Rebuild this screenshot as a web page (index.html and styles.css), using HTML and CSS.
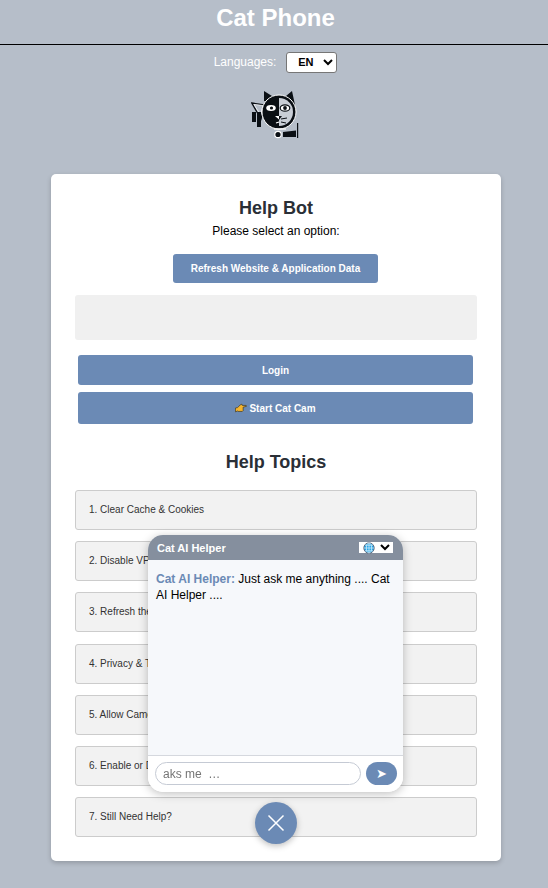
FILE: index.html
```html
<!DOCTYPE html>
<html lang="en">
<head>
	<meta charset="UTF-8">
	<title>Cat Phone</title>
	<link rel="stylesheet" href="styles.css">
</head>
<body>
	<header class="top">
		<h1>Cat Phone</h1>
	</header>
	<div class="lang">
		<label for="lang">Languages:</label>
		<select id="lang" class="lang-select">
			<option>EN</option>
		</select>
	</div>
	<div class="logo">
		<svg width="50" height="50" viewBox="0 0 50 50">
			<path d="M0.8 12 L14 14 L10 28 Z" fill="none" stroke="#0a0f14" stroke-width="1.4"/>
			<path d="M3 13.5 L12 14.5 L9.5 24 Z" fill="none" stroke="#fff" stroke-width="0.7"/>
			<rect x="1" y="21" width="4" height="10" fill="#0a0f14"/>
			<rect x="6" y="21" width="4" height="15" fill="#0a0f14"/>
			<path d="M13 10 L13 0 L21 5 L35 5 L41 0 L44 14 Z" fill="#0a0f14"/>
			<circle cx="28" cy="21" r="17" fill="#0a0f14" stroke="#fff" stroke-width="1"/>
			<path d="M28 7 A14 14 0 0 1 28 35 Z" fill="#c9ced6"/>
			<ellipse cx="20" cy="17" rx="4.8" ry="3" fill="#fff"/>
			<circle cx="20.5" cy="17" r="1.6" fill="#0a0f14"/>
			<ellipse cx="34" cy="17" rx="4.8" ry="3.2" fill="#fff" stroke="#0a0f14" stroke-width="1.2"/>
			<circle cx="34" cy="17" r="1.9" fill="#0a0f14"/>
			<path d="M24 25 L28 25 L28 28.5 Z" fill="#fff"/>
			<path d="M25 32 L28 31" stroke="#fff" stroke-width="1.2"/>
			<path d="M28 25 L31 25 L28 29 Z" fill="#0a0f14"/>
			<path d="M30 28 L36 27 M30 31 L35 32" stroke="#0a0f14" stroke-width="1"/>
			<path d="M23 38 L35 38" stroke="#fff" stroke-width="1.2"/>
			<circle cx="27" cy="43.5" r="3.2" fill="#0a0f14" stroke="#fff" stroke-width="1.2"/>
			<path d="M32 41 L45 39.5 L45 46 L32 46 Z" fill="#0a0f14"/>
			<rect x="46" y="32" width="1.2" height="15" fill="#0a0f14"/>
		</svg>
	</div>

	<main class="card">
		<h2 class="card-title">Help Bot</h2>
		<p class="card-sub">Please select an option:</p>
		<div class="refresh-row">
			<button class="btn refresh-btn">Refresh Website &amp; Application Data</button>
		</div>
		<div class="status-box"></div>
		<div class="actions">
			<button class="btn action-btn login-btn">Login</button>
			<button class="btn action-btn cam-btn">
				<svg width="12" height="10" viewBox="0 0 14 11">
					<path d="M0.5 5.5 L3 5 L6 2 L8 1 L8.5 2.5 L13 2.5 L13.5 3.5 L9.5 4.5 L9.5 8.5 L8.5 9.5 L3.5 9.5 L3 9 L0.5 10 Z" fill="#f5b52e" stroke="#3a3320" stroke-width="0.8"/>
				</svg>
				<span>Start Cat Cam</span>
			</button>
		</div>
		<h2 class="topics-title">Help Topics</h2>
		<ul class="topics">
			<li>1. Clear Cache &amp; Cookies</li>
			<li>2. Disable VPN</li>
			<li>3. Refresh the Page</li>
			<li>4. Privacy &amp; Terms</li>
			<li>5. Allow Camera Access</li>
			<li>6. Enable or Disable</li>
			<li>7. Still Need Help?</li>
		</ul>
	</main>

	<section class="chat">
		<div class="chat-head">
			<span class="chat-title">Cat AI Helper</span>
			<div class="chat-lang">
				<svg width="12" height="12" viewBox="0 0 12 12">
					<circle cx="6" cy="6" r="5.2" fill="#29a7e8" stroke="#556" stroke-width="0.8"/>
					<path d="M1 6 H11 M6 1 V11 M2 3.2 H10 M2 8.8 H10" stroke="#dff2fb" stroke-width="0.7" fill="none"/>
					<ellipse cx="6" cy="6" rx="2.6" ry="5" stroke="#dff2fb" stroke-width="0.7" fill="none"/>
				</svg>
				<svg width="10" height="7" viewBox="0 0 10 7">
					<path d="M1 1 L5 5 L9 1" stroke="#000" stroke-width="2" fill="none"/>
				</svg>
			</div>
		</div>
		<div class="chat-body">
			<p><b>Cat AI Helper:</b> Just ask me anything .... Cat AI Helper ....</p>
		</div>
		<div class="chat-foot">
			<input class="chat-input" type="text" placeholder="aks me  …">
			<button class="chat-send">➤</button>
		</div>
	</section>
	<button class="chat-close">
		<svg width="18" height="18" viewBox="0 0 18 18">
			<path d="M1.5 1.5 L16.5 16.5 M16.5 1.5 L1.5 16.5" stroke="#fff" stroke-width="1.5"/>
		</svg>
	</button>
</body>
</html>
```

FILE: styles.css
```css
*{
	box-sizing: border-box;
}

html{
	overflow: hidden;
}

body{
	width: 551px;
	margin: 0;
	min-height: 888px;
	background: #b6bec9;
	font-family: "Liberation Sans", Arial, sans-serif;
	color: #000;
}

.top{
	height: 45px;
	border-bottom: 1px solid #000;
}

.top h1{
	margin: 0;
	padding-top: 4px;
	font-size: 24px;
	line-height: 28px;
	text-align: center;
	color: #fff;
}

.lang{
	display: flex;
	justify-content: center;
	align-items: center;
	gap: 10px;
	height: 22px;
	margin-top: 6px;
	font-size: 12px;
	color: #fff;
}

.lang-select{
	width: 51px;
	height: 21px;
	border: 1px solid #767676;
	border-radius: 3px;
	background: #fff;
	font-family: inherit;
	font-size: 11px;
	font-weight: bold;
	text-align: center;
	color: #000;
}

.logo{
	display: flex;
	justify-content: center;
	height: 50px;
	margin-top: 18px;
	padding-left: 1px;
}

.card{
	width: 450px;
	height: 687px;
	margin: 33px 0 0 51px;
	padding: 24px;
	border-radius: 5px;
	background: #fff;
	box-shadow: 0 2px 5px rgba(0,0,0,.2);
}

.card-title{
	margin: 0;
	font-size: 18px;
	line-height: 20px;
	text-align: center;
	color: #2a2f36;
}

.card-sub{
	margin: 6px 0 0;
	font-size: 12px;
	line-height: 14px;
	text-align: center;
}

.btn{
	border: 0;
	border-radius: 3px;
	background: #6b8ab5;
	font-family: inherit;
	font-size: 10px;
	font-weight: bold;
	color: #fff;
}

.refresh-row{
	display: flex;
	justify-content: center;
	margin-top: 16px;
	padding-right: 1px;
}

.refresh-btn{
	width: 205px;
	height: 29px;
}

.status-box{
	height: 45px;
	margin-top: 12px;
	border-radius: 3px;
	background: #f0f0f0;
}

.actions{
	display: flex;
	flex-direction: column;
	gap: 7px;
	margin: 15px 4px 0 3px;
}

.action-btn{
	width: 100%;
}

.login-btn{
	height: 30px;
}

.cam-btn{
	display: flex;
	justify-content: center;
	align-items: center;
	gap: 2px;
	height: 32px;
}

.topics-title{
	margin: 28px 0 0;
	font-size: 18px;
	line-height: 21px;
	text-align: center;
	color: #2a2f36;
}

.topics{
	display: flex;
	flex-direction: column;
	gap: 11.2px;
	margin: 17px 0 0;
	padding: 0;
	list-style: none;
}

.topics li{
	height: 40px;
	padding-left: 13px;
	border: 1px solid #ccc;
	border-radius: 3px;
	background: #f2f2f2;
	font-size: 10px;
	line-height: 38px;
	color: #333;
}

.chat{
	display: flex;
	flex-direction: column;
	position: fixed;
	left: 148px;
	top: 535px;
	width: 255px;
	height: 257px;
	border-radius: 15px;
	background: #fff;
	box-shadow: 0 2px 10px rgba(0,0,0,.25);
	overflow: hidden;
}

.chat-head{
	display: flex;
	justify-content: space-between;
	align-items: center;
	height: 25px;
	padding: 0 10px 0 9px;
	background: #858f9e;
}

.chat-title{
	font-size: 11px;
	font-weight: bold;
	color: #fff;
}

.chat-lang{
	display: flex;
	justify-content: space-between;
	align-items: center;
	width: 34px;
	height: 11px;
	padding: 0 3px 0 4px;
	background: #fff;
}

.chat-body{
	flex: 1;
	padding: 12px 8px 0;
	background: #f6f8fb;
	font-size: 12px;
	line-height: 15.5px;
}

.chat-body p{
	margin: 0;
}

.chat-body b{
	color: #6b8ab5;
}

.chat-foot{
	display: flex;
	gap: 5px;
	height: 37px;
	padding: 6px 6px 0 7px;
	border-top: 1px solid #d5d8de;
	background: #fff;
}

.chat-input{
	width: 207px;
	height: 23px;
	padding: 0 7px;
	border: 1px solid #c5cad4;
	border-radius: 12px;
	font-family: inherit;
	font-size: 12px;
}

.chat-input::placeholder{
	color: #757575;
}

.chat-send{
	width: 31px;
	height: 23px;
	padding: 0;
	border: 0;
	border-radius: 12px;
	background: #6b8ab5;
	font-family: "DejaVu Sans", sans-serif;
	font-size: 13px;
	color: #fff;
}

.chat-close{
	display: flex;
	justify-content: center;
	align-items: center;
	position: fixed;
	left: 255px;
	top: 802px;
	width: 42px;
	height: 42px;
	padding: 0;
	border: 0;
	border-radius: 50%;
	background: #6b8ab5;
	box-shadow: 0 2px 6px rgba(0,0,0,.25);
}
```
